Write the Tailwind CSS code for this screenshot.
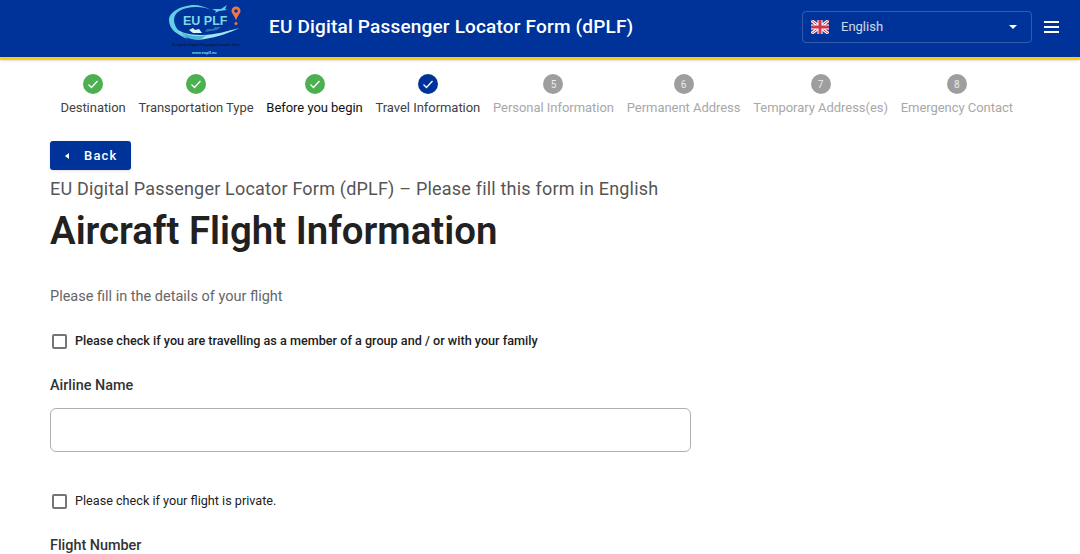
<!DOCTYPE html>
<html lang="en">
<head>
    <meta charset="UTF-8">
    <title>EU Digital Passenger Locator Form (dPLF)</title>
    <script src="https://cdn.jsdelivr.net/npm/@tailwindcss/browser@4"></script>
</head>
<body class="bg-white font-['Roboto',sans-serif] text-[#212121] h-[554px] overflow-hidden relative">
    <!-- Header -->
    <header class="h-[60px] bg-[#003399] border-b-[3px] border-[#ffcc00] flex items-center shadow-sm">
        <div class="relative w-[72px] h-[57px] ml-[169px] shrink-0 self-start">
            <svg class="absolute left-0 top-0" width="72" height="57" viewBox="0 0 72 57" fill="none">
                <!-- swoosh -->
                <path d="M24 5C10 6 0 13 0 20C0 29 8 35 19 39C12 33 5 28 5 20C5 12 14 7 27 7C33 7 38 8 42 10C37 7 31 5 24 5Z" fill="#62cfe6"/>
                <path d="M9 30C13 37 24 41 36 39C48 37 60 33 71 28C58 31 46 35 34 35C24 35 15 34 9 30Z" fill="#9fe6f2"/>
                <path d="M11 31C18 36 29 37 38 35L31 40C22 40 15 37 11 31Z" fill="#4ab4d4"/>
                <!-- ships -->
                <path d="M20 30L24 33L33 33L30 29L26 30L24 28Z" fill="#d9f3f8"/>
                <path d="M36 32L48 30L52 27L46 27L44 29L38 29Z" fill="#2c6fa8"/>
                <!-- plane -->
                <path d="M43 9L52 9L58 5L56 9L58 10L50 11L46 13L47 11Z" fill="#62cfe6"/>
                <!-- pin -->
                <path d="M71.500 11a4.500 4.500 0 1 0-9 0c0 2.500 3 4.500 4.500 9.500c1.500-5 4.500-7 4.500-9.500Z" fill="#f0764a"/>
                <circle cx="67" cy="11" r="1.800" fill="#003399"/>
                <circle cx="67" cy="23.500" r="1.500" fill="#f0764a"/>
            </svg>
            <span class="absolute left-[14px] top-[13px] text-[#7fd6ea] text-[12.500px] leading-[16px] font-bold font-['Liberation_Sans',sans-serif] whitespace-nowrap">EU PLF</span>
            <span class="absolute left-[3px] top-[43px] text-[#0a1a40] text-[3.700px] leading-[5px] font-bold whitespace-nowrap">European Digital Passenger Locator Form</span>
            <span class="absolute left-[23px] top-[50px] text-[#7fd6ea] text-[4px] leading-[5px] font-bold whitespace-nowrap">www.euplf.eu</span>
        </div>
        <h1 class="ml-[28px] text-white text-[19px] font-medium tracking-[0.18px] whitespace-nowrap mb-[3px]">EU Digital Passenger Locator Form (dPLF)</h1>
        <div class="ml-auto w-[230px] h-[32px] border border-white/20 rounded-[4px] flex items-center pl-[8px] pr-[9px] mb-[3px]">
            <svg width="18" height="14" viewBox="0 0 18 14">
                <rect width="18" height="14" fill="#2a3f8f"/>
                <path d="M0 0L18 14M18 0L0 14" stroke="#fff" stroke-width="3"/>
                <path d="M0 0L18 14M18 0L0 14" stroke="#d3344a" stroke-width="1"/>
                <path d="M9 0V14M0 7H18" stroke="#fff" stroke-width="5"/>
                <path d="M9 0V14M0 7H18" stroke="#d3344a" stroke-width="3"/>
            </svg>
            <span class="ml-[12px] text-[13px] text-white/80">English</span>
            <span class="ml-auto w-0 h-0 border-x-[4px] border-x-transparent border-t-[4px] border-t-white mr-[5px]"></span>
        </div>
        <div class="ml-[12px] mr-[21px] w-[15px] flex flex-col gap-[3px] mb-[3px]">
            <span class="h-[2px] bg-white"></span>
            <span class="h-[2px] bg-white"></span>
            <span class="h-[2px] bg-white"></span>
        </div>
    </header>

    <!-- Stepper -->
    <nav class="flex pl-[54px] pt-[14px] h-[59px] tracking-[-0.04px]">
        <div class="px-[6.400px] flex flex-col items-center">
            <span class="w-5 h-5 rounded-full bg-[#4caf50] flex items-center justify-center"><svg width="12" height="12" viewBox="0 0 12 12" fill="none"><path d="M1.500 6.500L4.500 9.500L10.500 3" stroke="#fff" stroke-width="1.300"/></svg></span>
            <span class="mt-[6px] text-[13px] leading-[16px] text-[#424242] whitespace-nowrap">Destination</span>
        </div>
        <div class="px-[6.400px] flex flex-col items-center">
            <span class="w-5 h-5 rounded-full bg-[#4caf50] flex items-center justify-center"><svg width="12" height="12" viewBox="0 0 12 12" fill="none"><path d="M1.500 6.500L4.500 9.500L10.500 3" stroke="#fff" stroke-width="1.300"/></svg></span>
            <span class="mt-[6px] text-[13px] leading-[16px] text-[#424242] whitespace-nowrap">Transportation Type</span>
        </div>
        <div class="px-[6.400px] flex flex-col items-center">
            <span class="w-5 h-5 rounded-full bg-[#4caf50] flex items-center justify-center"><svg width="12" height="12" viewBox="0 0 12 12" fill="none"><path d="M1.500 6.500L4.500 9.500L10.500 3" stroke="#fff" stroke-width="1.300"/></svg></span>
            <span class="mt-[6px] text-[13px] leading-[16px] text-[#111] whitespace-nowrap">Before you begin</span>
        </div>
        <div class="px-[6.400px] flex flex-col items-center">
            <span class="w-5 h-5 rounded-full bg-[#003399] flex items-center justify-center"><svg width="12" height="12" viewBox="0 0 12 12" fill="none"><path d="M1.500 6.500L4.500 9.500L10.500 3" stroke="#fff" stroke-width="1.300"/></svg></span>
            <span class="mt-[6px] text-[13px] leading-[16px] text-[#424242] whitespace-nowrap">Travel Information</span>
        </div>
        <div class="px-[6.400px] flex flex-col items-center">
            <span class="w-5 h-5 rounded-full bg-[#9e9e9e] text-white/80 text-[10px] flex items-center justify-center">5</span>
            <span class="mt-[6px] text-[13px] leading-[16px] text-[#a8a8a8] whitespace-nowrap">Personal Information</span>
        </div>
        <div class="px-[6.400px] flex flex-col items-center">
            <span class="w-5 h-5 rounded-full bg-[#9e9e9e] text-white/80 text-[10px] flex items-center justify-center">6</span>
            <span class="mt-[6px] text-[13px] leading-[16px] text-[#a8a8a8] whitespace-nowrap">Permanent Address</span>
        </div>
        <div class="px-[6.400px] flex flex-col items-center">
            <span class="w-5 h-5 rounded-full bg-[#9e9e9e] text-white/80 text-[10px] flex items-center justify-center">7</span>
            <span class="mt-[6px] text-[13px] leading-[16px] text-[#a8a8a8] whitespace-nowrap">Temporary Address(es)</span>
        </div>
        <div class="px-[6.400px] flex flex-col items-center">
            <span class="w-5 h-5 rounded-full bg-[#9e9e9e] text-white/80 text-[10px] flex items-center justify-center">8</span>
            <span class="mt-[6px] text-[13px] leading-[16px] text-[#a8a8a8] whitespace-nowrap">Emergency Contact</span>
        </div>
    </nav>

    <!-- Form -->
    <main class="pl-[50px] pt-[22px]">
        <button class="w-[80.500px] h-[29px] bg-[#003399] rounded-[3px] text-white text-[13px] font-medium tracking-[1.200px] flex items-center shadow-sm">
            <span class="ml-[15px] w-0 h-0 border-y-[3px] border-y-transparent border-r-[4px] border-r-white"></span>
            <span class="ml-[15px]">Back</span>
        </button>
        <p class="mt-[7px] text-[18px] leading-[24px] text-[#555] tracking-[0.2px]">EU Digital Passenger Locator Form (dPLF) – Please fill this form in English</p>
        <h2 class="mt-[7px] text-[38.400px] leading-[46px] font-semibold text-[#212121]">Aircraft Flight Information</h2>
        <p class="mt-[33px] text-[14.500px] leading-[20px] text-[#666]">Please fill in the details of your flight</p>
        <label class="mt-[24px] flex items-center h-[20px]">
            <span class="ml-[2px] w-[15px] h-[15px] border-2 border-[#757575] rounded-[2px]"></span>
            <span class="ml-[8px] text-[12.650px] font-medium text-[#212121]">Please check if you are travelling as a member of a group and / or with your family</span>
        </label>
        <p class="mt-[25px] text-[14.400px] leading-[20px] font-medium text-[#333]">Airline Name</p>
        <div class="mt-[12px] w-[641px] h-[44px] border border-[#b0b0b0] rounded-[6px]"></div>
        <label class="mt-[39px] flex items-center h-[20px]">
            <span class="ml-[2px] w-[15px] h-[15px] border-2 border-[#757575] rounded-[2px]"></span>
            <span class="ml-[8px] text-[12.650px] text-[#212121]">Please check if your flight is private.</span>
        </label>
        <p class="mt-[25px] text-[14.400px] leading-[20px] font-medium text-[#333]">Flight Number</p>
    </main>
</body>
</html>
